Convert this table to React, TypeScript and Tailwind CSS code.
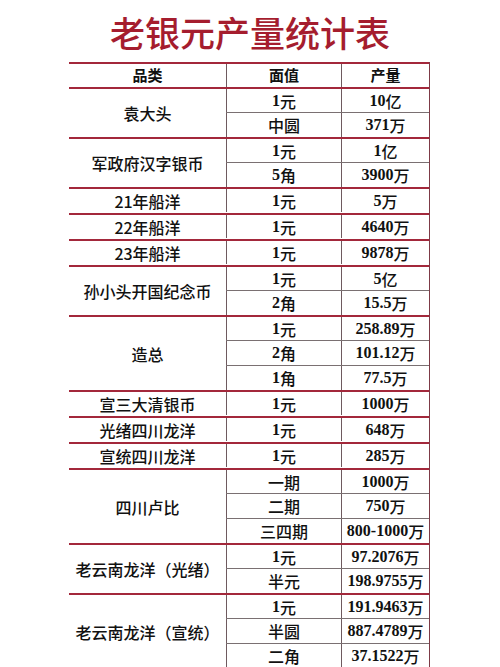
import React from "react";

type Group = { name: string; rows: [string, string][] };

const groups: Group[] = [
  { name: "袁大头", rows: [["1元", "10亿"], ["中圆", "371万"]] },
  { name: "军政府汉字银币", rows: [["1元", "1亿"], ["5角", "3900万"]] },
  { name: "21年船洋", rows: [["1元", "5万"]] },
  { name: "22年船洋", rows: [["1元", "4640万"]] },
  { name: "23年船洋", rows: [["1元", "9878万"]] },
  { name: "孙小头开国纪念币", rows: [["1元", "5亿"], ["2角", "15.5万"]] },
  { name: "造总", rows: [["1元", "258.89万"], ["2角", "101.12万"], ["1角", "77.5万"]] },
  { name: "宣三大清银币", rows: [["1元", "1000万"]] },
  { name: "光绪四川龙洋", rows: [["1元", "648万"]] },
  { name: "宣统四川龙洋", rows: [["1元", "285万"]] },
  { name: "四川卢比", rows: [["一期", "1000万"], ["二期", "750万"], ["三四期", "800-1000万"]] },
  { name: "老云南龙洋（光绪）", rows: [["1元", "97.2076万"], ["半元", "198.9755万"]] },
  { name: "老云南龙洋（宣统）", rows: [["1元", "191.9463万"], ["半圆", "887.4789万"], ["二角", "37.1522万"]] },
];

function Val({ text }: { text: string }) {
  const parts = text.split(/([0-9.\-]+)/).filter((p) => p.length > 0);
  return (
    <>
      {parts.map((p, i) =>
        /^[0-9.\-]+$/.test(p) ? (
          <span key={i} className="font-bold font-['Liberation_Serif',serif]">
            {p}
          </span>
        ) : (
          <span key={i} className="font-medium font-['Noto_Sans_CJK_SC',sans-serif]">
            {p}
          </span>
        )
      )}
    </>
  );
}

export default function App() {
  return (
    <div className="w-[500px] h-[667px] bg-white overflow-hidden">
      <div className="h-[62px] flex items-center justify-center text-[35px] leading-none font-medium text-[#a51d2e] font-['Noto_Sans_CJK_SC',sans-serif]">
        老银元产量统计表
      </div>
      <div className="ml-[69px] w-[361px] border-r border-r-[#7d3a46] text-[#111] text-[16px]">
        <div className="flex border-t-2 border-t-[#a3283b] h-[25px] font-bold text-[15px] font-['Noto_Sans_CJK_SC',sans-serif]">
          <div className="w-[157px] flex items-center justify-center">品类</div>
          <div className="w-[115px] border-l border-l-[#6e5a5f] flex items-center justify-center">面值</div>
          <div className="flex-1 border-l border-l-[#6e5a5f] flex items-center justify-center">产量</div>
        </div>
        {groups.map((g, gi) => (
          <div
            key={gi}
            className={
              gi === groups.length - 1
                ? "flex border-t-2 border-t-[#a3283b] border-b-2 border-b-[#a3283b]"
                : "flex border-t-2 border-t-[#a3283b]"
            }
          >
            <div className="w-[157px] flex items-center justify-center font-medium font-['Noto_Sans_CJK_SC',sans-serif]">
              {g.name}
            </div>
            <div className="flex-1 flex flex-col">
              {g.rows.map((r, ri) => (
                <div
                  key={ri}
                  className={ri === 0 ? "flex h-[23px]" : "flex h-[25px] border-t border-t-[#7a7072]"}
                >
                  <div className="w-[115px] border-l border-l-[#6e5a5f] flex items-center justify-center">
                    <Val text={r[0]} />
                  </div>
                  <div className="flex-1 border-l border-l-[#6e5a5f] flex items-center justify-center">
                    <Val text={r[1]} />
                  </div>
                </div>
              ))}
            </div>
          </div>
        ))}
      </div>
    </div>
  );
}
